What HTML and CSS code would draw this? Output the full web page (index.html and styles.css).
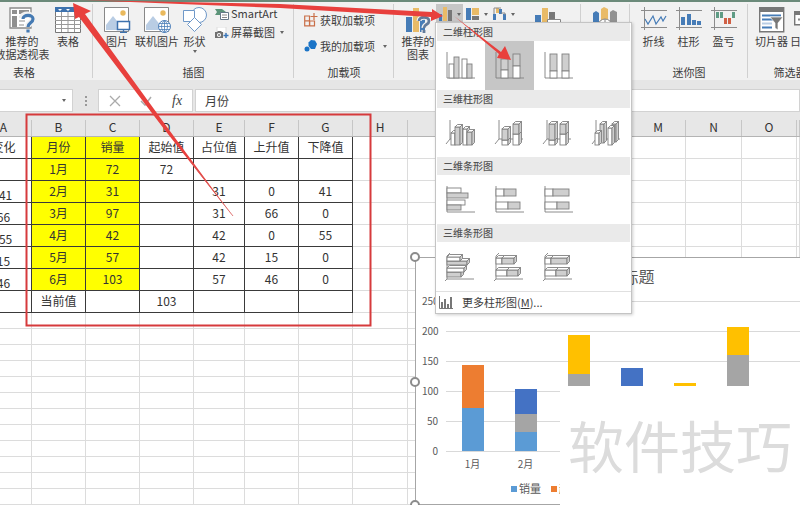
FILE: index.html
```html
<!DOCTYPE html>
<html lang="zh-CN">
<head>
<meta charset="utf-8">
<title>月份</title>
<link rel="stylesheet" href="styles.css">
</head>
<body>
<div class="app">
  <header class="ribbon">
    <section class="group group-tables">
      <div class="tools">
        <button class="tool">
          <svg width="26" height="26" viewBox="0 0 26 26"><path d="M1 1h21v20H1z" fill="#fff" stroke="#8a8a8a" stroke-width="1.3"/><path d="M3 3h5v4H3zM10 3h10v4H10zM3 9h5v11H3z" fill="#8f8f8f"/><path d="M10 10h5M10 14h6M10 18h5" stroke="#8f8f8f"/><path d="M13 11c0-4.500 11-5 11 1 0 4-5 3.500-5 8" fill="none" stroke="#f1f1f1" stroke-width="6"/><path d="M14 12c0-4.500 10-5 10 0 0 4-5 3.500-5 8M19 22.500v3" fill="none" stroke="#457ab3" stroke-width="3.200"/></svg>
          <span>推荐的<br>数据透视表</span>
        </button>
        <button class="tool">
          <svg width="26" height="26" viewBox="0 0 26 26"><path d="M.5.500h25v25H.5z" fill="#fff" stroke="#777"/><path d="M0 0h26v5H0z" fill="#3d72ae"/><path d="M3 2l2 2 2-2zM11 2l2 2 2-2zM19 2l2 2 2-2z" fill="#fff"/><path d="M0 9.500h26M0 13.500h26M0 17.500h26M0 21.500h26M6.500 5v20M13 5v20M19.500 5v20" stroke="#999"/></svg>
          <span>表格</span>
        </button>
      </div>
      <div class="caption">表格</div>
    </section>
    <section class="group group-art">
      <div class="tools">
        <button class="tool wide">
          <svg width="27" height="26" viewBox="0 0 27 26"><path d="M.5.500h24v24H.5z" fill="#fff" stroke="#888"/><circle cx="19" cy="6" r="2.700" fill="#eab95c"/><path d="M2 23v-5l7-9 8 10v4z" fill="#b9cde4"/><path d="M13.500 14.500h12v8h-12z" fill="#fff" stroke="#3d72ae" stroke-width="1.500"/><path d="M19.500 23v2M16 25.300h7" stroke="#3d72ae" stroke-width="1.300"/></svg>
          <span>图片</span>
        </button>
        <button class="tool wide">
          <svg width="27" height="26" viewBox="0 0 27 26"><path d="M.5.500h24v24H.5z" fill="#fff" stroke="#888"/><circle cx="19" cy="6" r="2.700" fill="#eab95c"/><path d="M2 23v-5l7-9 8 10v4z" fill="#b9cde4"/><circle cx="20.500" cy="19.500" r="6" fill="#fff" stroke="#4a7db8"/><path d="M14.500 19.500h12M15.500 16.500h10M15.500 22.500h10M20.500 13.500v12M20.500 13.500c-4 3-4 9 0 12M20.500 13.500c4 3 4 9 0 12" fill="none" stroke="#4a7db8" stroke-width=".8"/></svg>
          <span>联机图片</span>
        </button>
        <button class="tool">
          <svg width="26" height="26" viewBox="0 0 26 26"><circle cx="17" cy="8" r="7.500" fill="#fff" stroke="#6f98c8"/><path d="M1.500 3.500h11v11h-11z" fill="#fff" stroke="#6f98c8"/><path d="M12.500 10.500l7 7-7 7-7-7z" fill="#fff" stroke="#6f98c8"/></svg>
          <span>形状</span><i class="caret"></i>
        </button>
        <div class="stack stack-art">
          <button class="row"><svg width="14" height="12" viewBox="0 0 14 12"><path d="M0 1h7l4 3-4 3H0l2-3z" fill="#5c9479"/><path d="M5.500 4.500h8v7h-8z" fill="#fff" stroke="#678"/><path d="M7 7h5M7 9.500h5" stroke="#888"/></svg>SmartArt</button>
          <button class="row"><svg width="14" height="12" viewBox="0 0 14 12"><path d="M2 0h9v6H2z" fill="#fff" stroke="#ddd"/><path d="M0 5h2l1-1h3l1 1h1v6H0z" fill="#707070"/><circle cx="4" cy="8" r="2" fill="#fff"/><circle cx="4" cy="8" r="1" fill="#707070"/><path d="M11 6v5M8.500 8.500h5" stroke="#3a76b9" stroke-width="1.500"/></svg>屏幕截图<i class="caret"></i></button>
        </div>
      </div>
      <div class="caption">插图</div>
    </section>
    <section class="group group-addins">
      <div class="stack stack-addins">
        <button class="row"><svg width="14" height="14" viewBox="0 0 14 14"><path d="M.7 3h4.800v4.800H.7zM.7 8h4.800v4.800H.7zM5.700 8h4.800v4.800H5.700zM10 0v7M6.500 3.500h7" fill="none" stroke="#c96f48" stroke-width="1.200"/></svg>获取加载项</button>
        <button class="row"><svg width="14" height="14" viewBox="0 0 14 14"><path d="M7 1l4 .5L13 5l-2 5H7L4.500 7V3.500z" fill="#1b74c7"/><circle cx="3" cy="10" r="2.500" fill="#1b74c7"/></svg>我的加载项<i class="caret"></i></button>
      </div>
      <div class="caption">加载项</div>
    </section>
    <section class="group group-charts">
      <div class="tools">
        <button class="tool">
          <svg width="26" height="26" viewBox="0 0 26 26"><path d="M1 10h6v15H1zM15 5h5v20h-5z" fill="#467cb7"/><path d="M8 1h6v24H8z" fill="#e9bb68"/><path d="M14 14c0-5 10-5 10 0 0 4-5 3-5 7M19 23v3" fill="none" stroke="#f1f1f1" stroke-width="5"/><path d="M14 14c0-5 10-5 10 0 0 4-5 3-5 7M19 23v3" fill="none" stroke="#637b9a" stroke-width="2.800"/></svg>
          <span>推荐的<br>图表</span>
        </button>
        <button class="mini pressed" aria-label="柱形图"><svg width="15" height="14" viewBox="0 0 15 14"><path d="M1 7h3v7H1z" fill="#467cb7"/><path d="M5 0h4v14H5z" fill="#e9bb68"/><path d="M10 3h4v11h-4z" fill="#777"/></svg><i class="caret"></i></button>
        <button class="mini" aria-label="树状图"><svg width="14" height="14" viewBox="0 0 14 14"><path d="M0 1h5v12H0z" fill="#467cb7"/><path d="M6 1h7v7H6z" fill="#e9bb68"/><path d="M6 9h7v4H6z" fill="#777"/></svg><i class="caret"></i></button>
        <button class="mini" aria-label="瀑布图"><svg width="14" height="14" viewBox="0 0 14 14"><path d="M0 7h3v6H0zM6 2h3v5H6z" fill="#467cb7"/><path d="M3 1h3v5H3z" fill="#e9bb68"/><path d="M10 7h3v6h-3z" fill="#467cb7"/><path d="M1 7V1h7M8 6h4v2" fill="none" stroke="#888"/></svg><i class="caret"></i></button>
        <button class="pivot" aria-label="数据透视图"><svg width="26" height="24" viewBox="0 0 26 24"><path d="M0 8h6v15H0z" fill="#467cb7"/><path d="M7 1h6v22H7z" fill="#e9bb68"/><path d="M14 5h6v18h-6z" fill="#777"/><path d="M12.500 12.500h13v11h-13z" fill="#fff" stroke="#888"/></svg></button>
      </div>
    </section>
    <section class="group group-map">
      <button class="tool" aria-label="三维地图"><svg width="26" height="26" viewBox="0 0 26 26"><path d="M1 6l3-2 3 2v14H1z" fill="#467cb7"/><path d="M9 2l3-2 4 2v16H9z" fill="#e9bb68"/><path d="M18 5l3-2 4 2v14h-7z" fill="#929292"/><circle cx="13" cy="19" r="7" fill="#fff" stroke="#888"/><path d="M6 18h14M13 12v12" stroke="#888"/></svg></button>
    </section>
    <section class="group group-spark">
      <div class="tools">
        <button class="tool"><svg width="26" height="26" viewBox="0 0 26 26"><path d="M3.500 0v23M0 3.500h26M0 20.500h26" stroke="#8c8c8c" fill="none"/><path d="M4 12l3 5 5-8 3 8 5-7 2 4 3-5" fill="none" stroke="#467cb7" stroke-width="1.200"/></svg><span>折线</span></button>
        <button class="tool"><svg width="26" height="26" viewBox="0 0 26 26"><path d="M3.500 0v23M0 3.500h26M0 20.500h26" stroke="#8c8c8c" fill="none"/><path d="M5 10h4v8H5zM11 7h4v11h-4zM16 13h4v5h-4zM21 14h4v4h-4z" fill="#467cb7"/></svg><span>柱形</span></button>
        <button class="tool"><svg width="26" height="26" viewBox="0 0 26 26"><path d="M3.500 0v23M0 3.500h26M0 20.500h26" stroke="#8c8c8c" fill="none"/><path d="M5 5h3v6H5zM9 5h3v6H9zM21 5h3v6h-3z" fill="#5f9c85"/><path d="M13 11h3v6h-3zM17 11h3v6h-3z" fill="#d06045"/></svg><span>盈亏</span></button>
      </div>
      <div class="caption">迷你图</div>
    </section>
    <section class="group group-filter">
      <div class="tools">
        <button class="tool"><svg width="26" height="26" viewBox="0 0 26 26"><path d="M.7.700h24v24H.7z" fill="#fff" stroke="#777" stroke-width="1.400"/><path d="M0 0h25v5H0z" fill="#777"/><path d="M3 8.500h19M3 12.500h12M3 20.500h10" stroke="#467cb7" stroke-width="2"/><path d="M3 16.500h10" stroke="#b9cde4" stroke-width="2"/><path d="M11 10h13l-5 6v7l-3-2v-5z" fill="#777" stroke="#fff" stroke-width=".7"/></svg><span>切片器</span></button>
        <button class="tool"><svg width="26" height="26" viewBox="0 0 26 26"><path d="M.7 4.700h24v13H.7z" fill="#fff" stroke="#777" stroke-width="1.400"/><path d="M0 4h25v4H0z" fill="#777"/><path d="M4 12.500h17" stroke="#888" stroke-width="2"/></svg><span>日程表</span></button>
      </div>
      <div class="caption">筛选器</div>
    </section>
  </header>

  <div class="formula-bar">
    <div class="name-box"><input aria-label="名称框"><i class="caret"></i></div>
    <span class="dots"><i></i><i></i><i></i></span>
    <div class="entry">
      <button aria-label="取消"><svg width="12" height="12" viewBox="0 0 12 12"><path d="M1 1l10 10M11 1L1 11" stroke="#aaa" stroke-width="1.300"/></svg></button>
      <button aria-label="输入"><svg width="12" height="12" viewBox="0 0 12 12"><path d="M1 6l4 4 6-8" fill="none" stroke="#aaa" stroke-width="1.500"/></svg></button>
      <button class="fx" aria-label="插入函数">fx</button>
    </div>
    <input class="formula" aria-label="编辑栏" value="月份">
  </div>

  <main class="sheet">
    <table class="cells">
      <colgroup><col class="w56"><col class="w54"><col class="w54"><col class="w54"><col class="w51"><col class="w54"><col class="w54"><col class="w55"><col class="w56"><col class="w55"><col class="w56"><col class="w56"><col class="w55"><col class="w56"><col class="w55"><col></colgroup>
      <thead><tr id="letters"></tr></thead>
      <tbody id="rows"></tbody>
    </table>
    <figure class="chart">
      <figcaption>图表标题</figcaption>
      <div class="plot">
        <div class="scale"><span>250</span><span>200</span><span>150</span><span>100</span><span>50</span><span>0</span></div>
        <div class="bars" id="bars"></div>
      </div>
      <div class="months"><span>1月</span><span>2月</span></div>
      <ul class="legend"><li class="c1">销量</li><li class="c2">起始值</li></ul>
      <i class="handle top"></i><i class="handle middle"></i><i class="handle bottom"></i>
    </figure>
  </main>

  <div class="watermark">软件技巧</div>

  <nav class="menu">
    <h2>二维柱形图</h2><div class="choices" data-kind="col2"></div>
    <h2>三维柱形图</h2><div class="choices" data-kind="col3"></div>
    <h2>二维条形图</h2><div class="choices" data-kind="bar2"></div>
    <h2>三维条形图</h2><div class="choices" data-kind="bar3"></div>
    <button class="more"><svg width="14" height="14" viewBox="0 0 14 14"><path d="M.5 0v12.500H14" fill="none" stroke="#777"/><path d="M2 6h2v6H2zM5 3h2v9H5zM8 8h2v4H8zM11 1h2v11h-2z" fill="#777"/></svg><span>更多柱形图(<u>M</u>)...</span></button>
  </nav>

  <svg class="marks" width="800" height="505" viewBox="0 0 800 505">
    <path d="M26.500 114.500h344v211h-344z" fill="none" stroke="#d63a3c" stroke-width="2"/>
    <g fill="#e8403d">
      <path d="M233 216.500L164 129 79 17l-4 2-2-16 18 8-6 3 82 113z"/>
      <path d="M233 216L190 161" stroke="#d8605e" stroke-width=".8"/>
      <path d="M80 0l200 4 152 8V9l11 7-12 5v-4l-151-9z"/>
      <path d="M454 16l47 36 4-6 6 14-14-2 2-4z"/>
    </g>
  </svg>
</div>
<script src="script.js"></script>
</body>
</html>
```
FILE: styles.css
```css
* { box-sizing: border-box; }
body {
  margin: 0;
  font-family: "Noto Sans CJK SC", sans-serif;
  font-size: 11px;
  line-height: 13px;
  color: #3c3c3c;
}
button, input { font: inherit; color: inherit; border: 0; padding: 0; margin: 0; background: none; }
svg { display: block; flex: none; }
.app { position: relative; height: 100vh; overflow: hidden; display: flex; flex-direction: column; background: #fff; }

.ribbon { display: flex; flex: none; height: 80px; background: #f1f1f1; border-top: 2px solid #6b8a7a; overflow: hidden; }
.group { position: relative; flex: none; display: flex; flex-direction: column; justify-content: space-between; padding: 5px 0 1px; }
.group::after { content: ""; position: absolute; right: 0; top: 2px; bottom: 2px; width: 1px; background: #d0d0d0; }
.tools { display: flex; align-items: flex-start; }
.caption { text-align: center; }
.tool { flex: none; width: 35px; display: flex; flex-direction: column; align-items: center; gap: 2px; white-space: nowrap; }
.caret { display: inline-block; flex: none; border: 2px solid transparent; border-top: 3px solid #666; border-bottom: 0; }
.stack { display: flex; flex-direction: column; }
.row { display: flex; align-items: center; gap: 2px; white-space: nowrap; }
.group-tables { width: 138px; margin-left: -45px; }
.group-tables .tools { padding-left: 45px; gap: 2px; }
.group-tables .tool { width: 44px; }
.group-art { width: 201px; }
.group-art .tools { padding-left: 4px; }
.tool.wide { width: 40px; }
.stack-art { gap: 6px; margin-left: 3px; }
.stack-art .caret { margin-left: 3px; }
.group-addins { width: 100px; }
.stack-addins { gap: 12px; padding: 6px 0 0 10px; }
.stack-addins .caret { margin-left: 6px; }
.group-charts { width: 187px; }
.group-charts .tools { padding-left: 6px; }
.group-charts .tool { width: 36px; }
.mini { display: flex; align-items: center; justify-content: center; gap: 4px; width: 27px; height: 20px; margin-top: -3px; }
.mini.pressed { background: #c6c6c6; }
.pivot { margin-left: 18px; }
.group-map { width: 49px; padding-left: 6px; }
.group-spark { width: 118px; }
.group-spark .tools { padding-left: 6px; }
.group-filter { width: 84px; }
.group-filter .tools { padding-left: 6px; }
.group-filter::after { display: none; }

.formula-bar { display: flex; flex: none; align-items: stretch; height: 32px; padding-top: 9px; background: #e6e6e6; font-size: 12px; }
.name-box, .entry, .formula { background: #fff; border: 1px solid #d2d2d2; }
.name-box { display: flex; align-items: center; width: 73px; padding-right: 6px; border-left: 0; }
.name-box input { flex: 1; min-width: 0; }
.dots { display: flex; flex-direction: column; justify-content: center; align-items: center; gap: 2px; width: 25px; }
.dots i { width: 2px; height: 2px; background: #999; }
.entry { display: flex; align-items: center; justify-content: space-around; width: 95px; margin-right: 2px; }
.fx { font: italic 14px "Liberation Serif", serif; color: #444; }
.formula { flex: 1; min-width: 0; padding-left: 9px; }

.sheet { position: relative; flex: 1; min-height: 0; background: #fff; }
.cells { table-layout: fixed; border-collapse: collapse; width: calc(100% + 25px); margin-left: -25px; font-size: 12px; line-height: 16px; color: #333; }
.w51 { width: 51px; } .w54 { width: 54px; } .w55 { width: 55px; } .w56 { width: 56px; }
.cells th, .cells td { padding: 0; text-align: center; white-space: nowrap; overflow: hidden; border: 1px solid #dcdcdc; }
.cells th {
  height: 24px;
  padding-top: 7px;
  font-weight: 400;
  border: 0;
  border-bottom: 1px solid #b4b4b4;
  background: linear-gradient(#c6c6c6, #c6c6c6) right bottom / 1px 16px no-repeat #e7e7e7;
}
.cells td { height: 16px; }
.cells .data td { height: 22px; }
.cells .data .ink { border-color: #3a3a3a; }
.cells .yellow { background: #ff0; }
.cells .low { vertical-align: bottom; line-height: 14px; }

.chart { position: absolute; left: 415px; right: -30px; top: 145px; height: 248px; margin: 0; background: #fff; border: 1px solid #a6a6a6; color: #595959; }
.chart figcaption { padding-top: 8px; text-align: center; font-size: 16px; line-height: 20px; }
.plot { display: flex; height: 150px; margin-top: 15px; padding-left: 6px; }
.scale { display: flex; flex-direction: column; justify-content: space-between; width: 16px; margin: -7px 8px -7px 0; text-align: right; font-size: 10px; line-height: 14px; }
.bars { flex: 1; display: flex; background: repeating-linear-gradient(#d9d9d9 0 1px, transparent 1px 30px); box-shadow: 0 1px #d9d9d9; }
.slot { flex: none; width: 53px; display: flex; flex-direction: column-reverse; align-items: center; }
.slot i { flex: none; width: 22px; background: var(--c); }
.c1 { --c: #5b9bd5; } .c2 { --c: #ed7d31; } .c3 { --c: #a5a5a5; } .c4 { --c: #ffc000; } .c5 { --c: #4472c4; }
.months { display: flex; padding: 6px 0 0 30px; font-size: 10px; line-height: 14px; }
.months span { width: 53px; text-align: center; }
.legend { display: flex; gap: 10px; list-style: none; margin: 11px 0 0; padding: 0 0 0 95px; }
.legend li { display: flex; align-items: center; gap: 2px; }
.legend li::before { content: ""; width: 6px; height: 6px; background: var(--c); }
.handle { position: absolute; left: -6px; width: 10px; height: 10px; border: 2px solid #8c8c8c; border-radius: 50%; background: #fff; }
.handle.top { top: -6px; } .handle.middle { top: 119px; } .handle.bottom { bottom: -6px; }

.watermark { position: absolute; left: 560px; right: 0; top: 386px; bottom: 0; padding-left: 8px; background: #fff; color: #dcdcdc; font-size: 56px; line-height: 116px; white-space: nowrap; }

.menu { position: absolute; left: 435px; top: 22px; width: 197px; background: #fff; border: 1px solid #c4c4c4; box-shadow: 1px 1px 3px #0003; }
.menu h2 { margin: 0 1px; padding-left: 6px; background: #eaeaea; font-size: 10px; line-height: 18px; font-weight: 500; color: #555; }
.choices { display: flex; height: 49px; }
.choices button { width: 49px; display: flex; align-items: center; justify-content: center; }
.choices .selected { background: #c6c6c6; }
.more { display: flex; align-items: center; gap: 9px; width: 100%; height: 22px; padding-left: 3px; border-top: 1px solid #e0e0e0; }
.marks { position: absolute; left: 0; top: 0; pointer-events: none; }
```
FILE: script.js
```js
// Sheet columns; the ones that the open menu covers carry no letter
const letters = ['A', 'B', 'C', 'D', 'E', 'F', 'G', 'H', '', '', '', '', 'M', 'N', 'O', ''];
document.getElementById('letters').innerHTML = letters.map(l => `<th>${l}</th>`).join('');

const data = [
  ['变化', '月份', '销量', '起始值', '占位值', '上升值', '下降值'],
  ['', '1月', '72', '72', '', '', ''],
  ['-41', '2月', '31', '', '31', '0', '41'],
  ['66', '3月', '97', '', '31', '66', '0'],
  ['-55', '4月', '42', '', '42', '0', '55'],
  ['15', '5月', '57', '', '42', '15', '0'],
  ['46', '6月', '103', '', '57', '46', '0'],
  ['', '当前值', '', '103', '', '', '']
];
let html = '';
data.forEach((row, r) => {
  html += '<tr class="data">' + letters.map((_, c) => {
    const cls = [];
    if (c < 7) cls.push('ink');
    if ((c === 1 || c === 2) && r < 7) cls.push('yellow');
    if (c === 0 && r > 0) cls.push('low');
    return `<td class="${cls.join(' ')}">${row[c] || ''}</td>`;
  }).join('') + '</tr>';
});
for (let i = 0; i < 12; i++) html += '<tr>' + '<td></td>'.repeat(16) + '</tr>';
document.getElementById('rows').innerHTML = html;

// Stacked columns, one per month; the axis runs from 0 to 250
const series = [
  [[1, 72], [2, 72]],
  [[1, 31], [3, 31], [5, 41]],
  [[1, 97], [3, 31], [4, 66]],
  [[1, 42], [3, 42], [5, 55]],
  [[1, 57], [3, 42], [4, 15]],
  [[1, 103], [3, 57], [4, 46]]
];
document.getElementById('bars').innerHTML = series.map(parts =>
  '<div class="slot">' +
  parts.map(([c, v]) => `<i class="c${c}" style="height:${v / 2.5}%"></i>`).join('') + '</div>').join('');

// Chart type icons
const W = '#fff', G = '#cfcfcf';
const box = (x, y, w, h, f) => `<rect x="${x}" y="${y}" width="${w}" height="${h}" fill="${f}"/>`;
const prism = (x, y, w, h, f, d = 2.5) => box(x, y, w, h, f) +
  `<path d="M${x} ${y}l${d} ${-d}h${w}l${-d} ${d}z" fill="${W}"/>` +
  `<path d="M${x + w} ${y}l${d} ${-d}v${h}l${-d} ${d}z" fill="${G}"/>`;
const axis = '<path d="M1 0V26H29" fill="none"/>';
const floor = '<path d="M4 1V20L0 25M4 20H28" fill="none"/>';
const side = '<path d="M4 0L1 3V26H28M1 26l-2 2" fill="none"/>';
const icons = {
  col2: [
    axis + box(3, 12, 5, 14, W) + box(8, 5, 5, 21, G) + box(16, 7, 5, 19, W) + box(21, 12, 5, 14, G),
    axis + box(6, 7, 7, 11, G) + box(6, 18, 7, 8, W) + box(18, 2, 7, 12, G) + box(18, 14, 7, 12, W),
    axis + box(6, 2, 7, 17, G) + box(6, 19, 7, 7, W) + box(18, 2, 7, 17, G) + box(18, 19, 7, 7, W)
  ],
  col3: [
    floor + prism(5, 14, 4, 12, W) + prism(9, 8, 5, 18, G) + prism(17, 10, 4, 16, W) + prism(21, 13, 5, 13, G),
    floor + prism(7, 21, 6, 5, W) + prism(7, 10, 6, 11, G) + prism(18, 15, 6, 11, W) + prism(18, 5, 6, 10, G),
    floor + prism(6, 21, 6, 5, W) + prism(6, 5, 6, 16, G) + prism(17, 15, 6, 11, W) + prism(17, 5, 6, 10, G),
    floor + prism(8, 5, 4, 19, G) + prism(3, 14, 4, 12, W) + prism(20, 5, 4, 18, G) + prism(16, 9, 4, 17, W)
  ],
  bar2: [
    axis + box(1, 2, 14, 5, W) + box(1, 7, 21, 5, G) + box(1, 14, 18, 5, W) + box(1, 19, 14, 5, G),
    axis + box(1, 3, 8, 7, W) + box(9, 3, 12, 7, G) + box(1, 16, 12, 7, W) + box(13, 16, 12, 7, G),
    axis + box(1, 3, 8, 7, W) + box(9, 3, 16, 7, G) + box(1, 16, 12, 7, W) + box(13, 16, 12, 7, G)
  ],
  bar3: [
    side + prism(1, 8, 20, 4, G) + prism(1, 4, 13, 4, W) + prism(1, 19, 14, 5, G) + prism(1, 15, 17, 4, W),
    side + prism(1, 5, 6, 6, W) + prism(7, 5, 12, 6, G) + prism(1, 17, 11, 6, W) + prism(12, 17, 11, 6, G),
    side + prism(1, 5, 6, 6, W) + prism(7, 5, 16, 6, G) + prism(1, 17, 11, 6, W) + prism(12, 17, 11, 6, G)
  ]
};
document.querySelectorAll('.choices').forEach(el => {
  el.innerHTML = icons[el.dataset.kind].map((s, i) =>
    `<button class="${el.dataset.kind === 'col2' && i === 1 ? 'selected' : ''}">` +
    `<svg width="31" height="29" viewBox="-1 -1 31 29" stroke="#808080" stroke-width=".9">${s}</svg></button>`).join('');
});
```
